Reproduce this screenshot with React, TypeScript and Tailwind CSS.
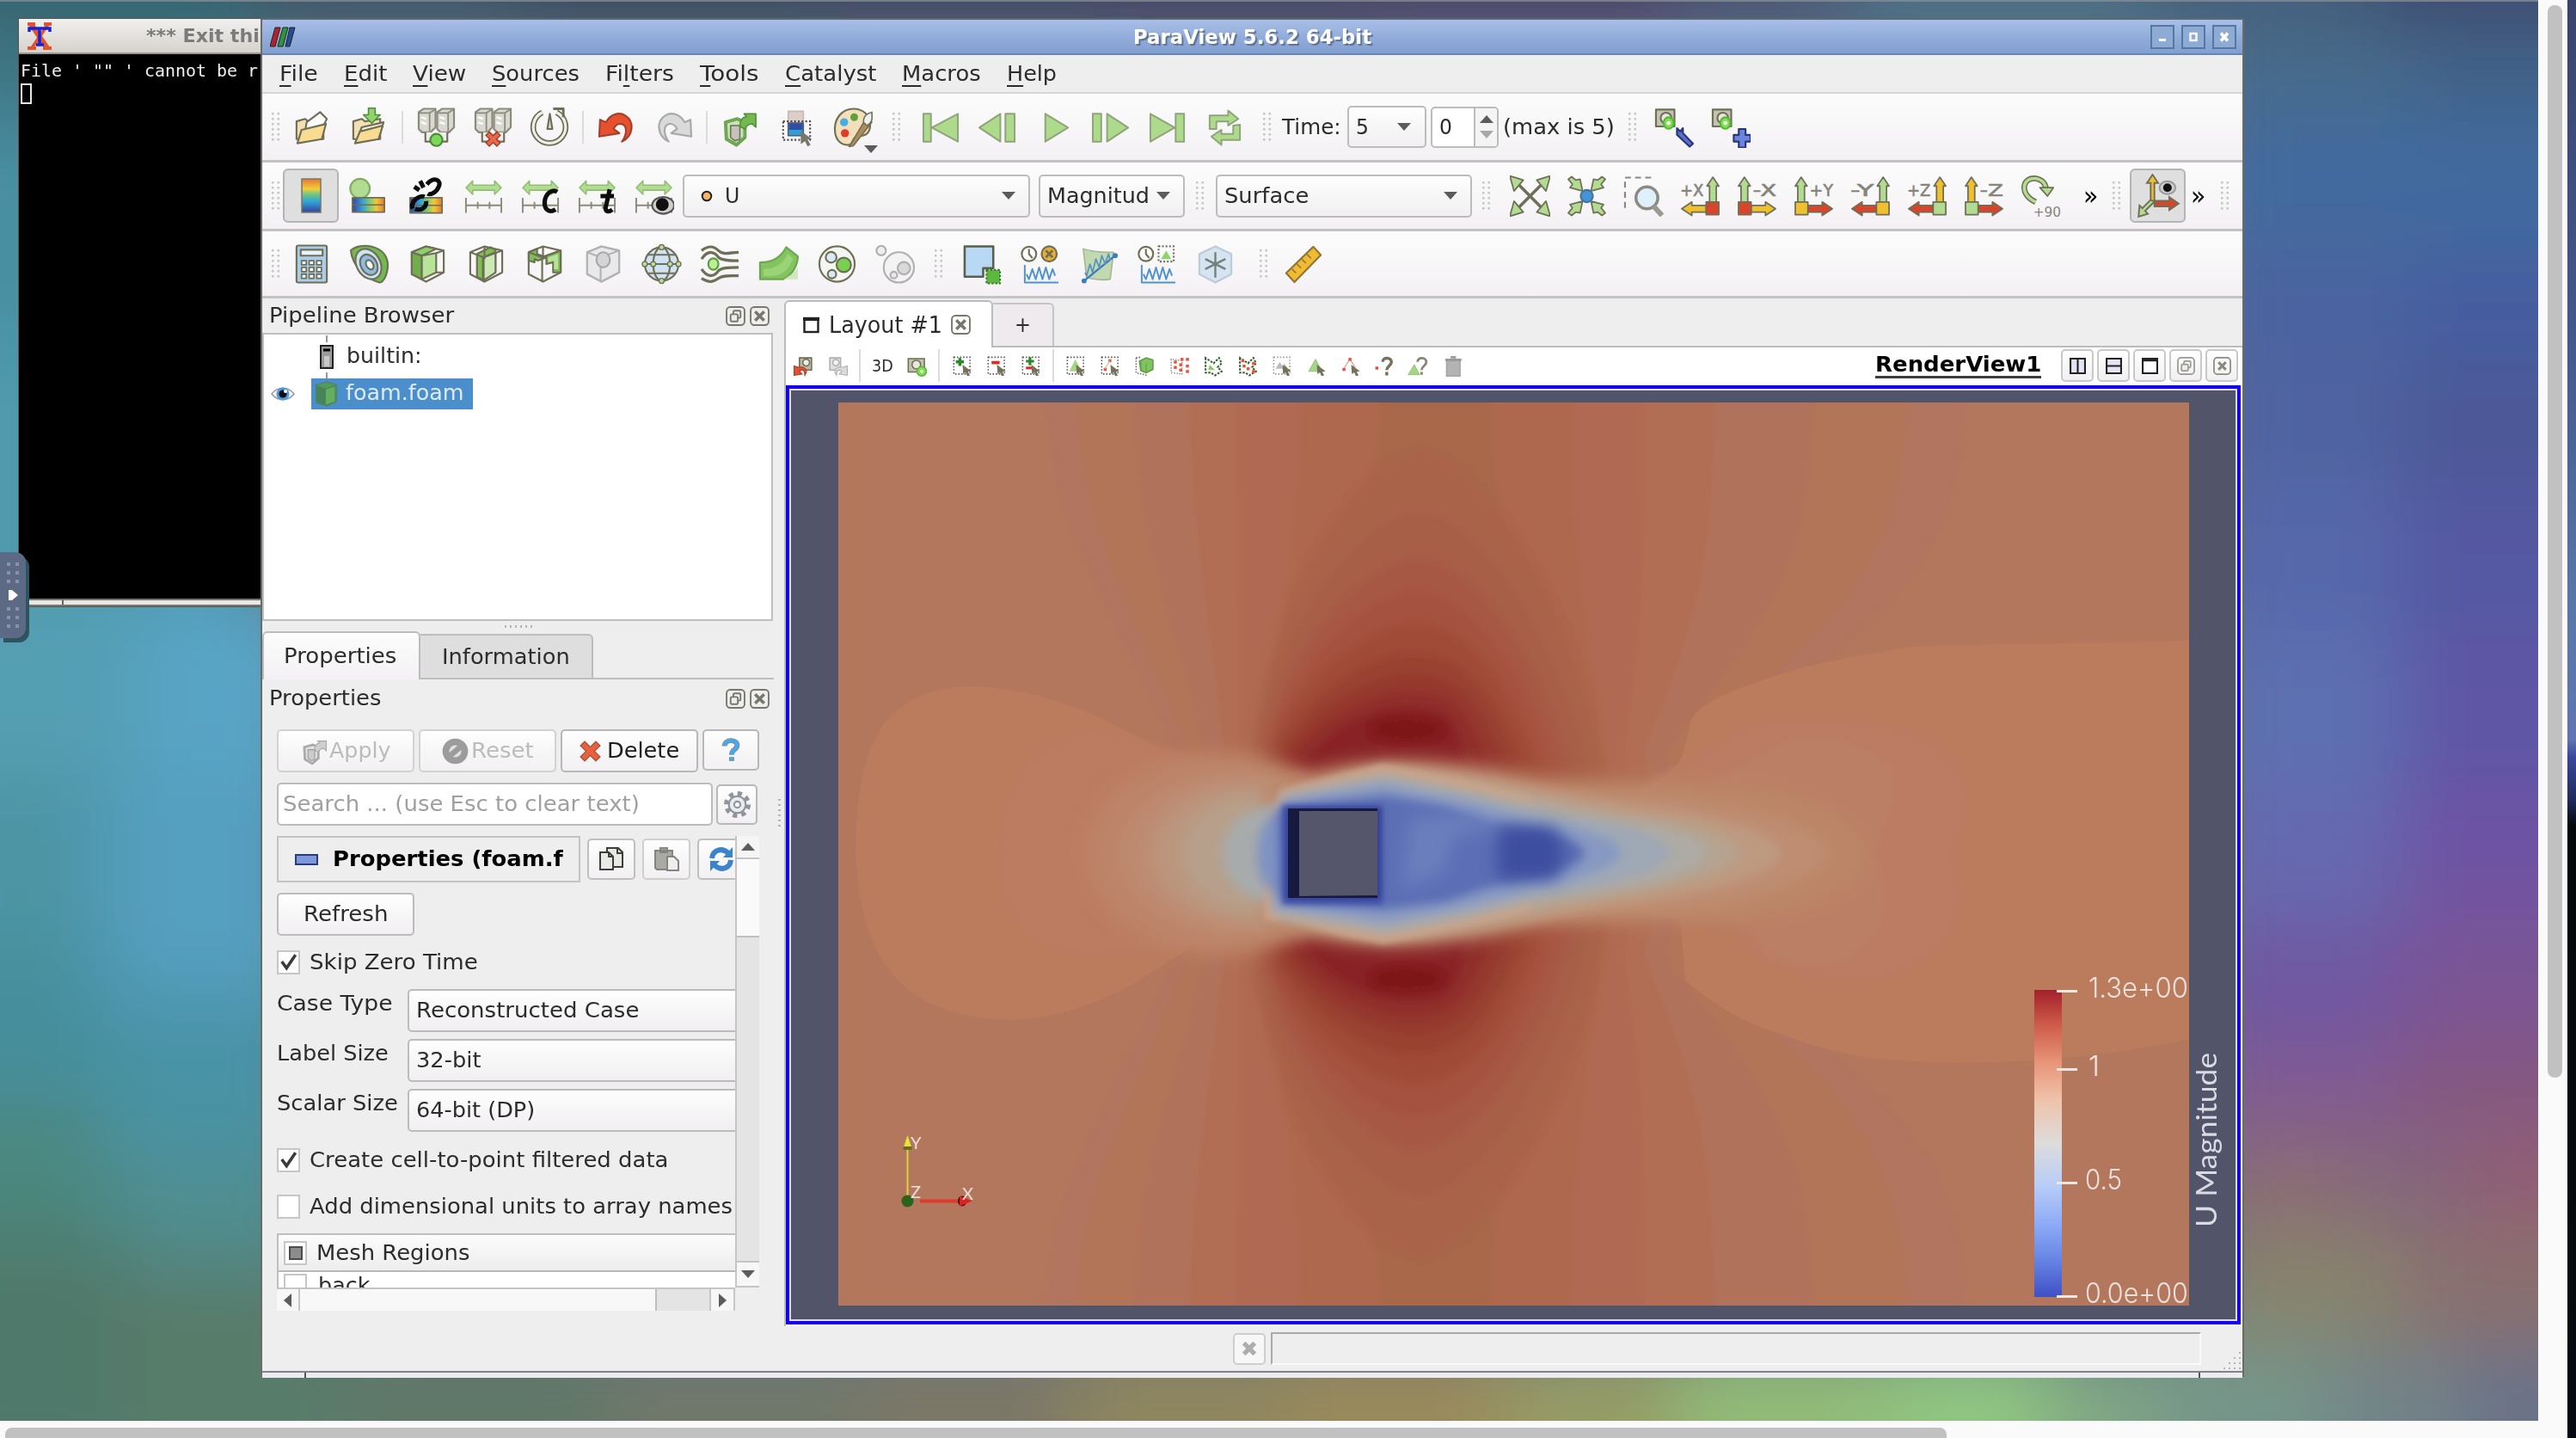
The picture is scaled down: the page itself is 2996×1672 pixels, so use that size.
import React, { useLayoutEffect, useRef, useState } from "react";

type Kids = { children?: React.ReactNode };

/* Text squeezed or stretched to an exact width, like hinted bitmap-scaled UI text. */
function T({ w, children, className = "" }: Kids & { w: number; className?: string }) {
  const ref = useRef<HTMLSpanElement>(null);
  const [k, setK] = useState(1);
  useLayoutEffect(() => {
    const n = ref.current?.offsetWidth || w;
    setK(w / n);
  }, [w]);
  return (
    <span className={"inline-block shrink-0 whitespace-pre " + className} style={{ width: w }}>
      <span ref={ref} className="inline-block origin-left" style={{ transform: `scaleX(${k})` }}>
        {children}
      </span>
    </span>
  );
}

const O = "#6f6f57";
const G = "#b2dc92";
const G2 = "#7fbf55";

function Ic({ children, w = "w-[66px]" }: Kids & { w?: string }) {
  return (
    <div className={"flex h-full shrink-0 items-center justify-center " + w}>
      <svg viewBox="0 0 24 24" className="h-[48px] w-[47px]" fill="none" stroke={O} strokeWidth="1.1" strokeLinejoin="round">
        {children}
      </svg>
    </div>
  );
}

function Handle({ w = "w-[12px]" }: { w?: string }) {
  return (
    <div className={"flex h-full shrink-0 items-center justify-center " + w}>
      <svg viewBox="0 0 10 34" className="h-[34px] w-[10px]" fill="#c6c6c6">
        {[0, 6, 12, 18, 24, 30].map((y) => (
          <g key={y}>
            <rect x="0" y={y} width="2.5" height="2.5" />
            <rect x="6.5" y={y} width="2.5" height="2.5" />
          </g>
        ))}
      </svg>
    </div>
  );
}

function Sep({ w = "w-[12px]" }: { w?: string }) {
  return (
    <div className={"flex h-full shrink-0 items-center justify-center " + w}>
      <div className="h-[38px] w-[2px] bg-[#dddcdd]" />
    </div>
  );
}

function Caret({ up = false, light = false }: { up?: boolean; light?: boolean }) {
  return (
    <svg viewBox="0 0 16 9" className="h-[9px] w-[16px] shrink-0" fill={light ? "#a8a8a8" : "#5c5c5c"}>
      {up ? <path d="M8 0 16 9H0z" /> : <path d="M0 0h16L8 9z" />}
    </svg>
  );
}

const comboCls =
  "flex shrink-0 items-center justify-between rounded-[5px] border-2 border-[#bdbcbd] bg-linear-to-b from-[#fefefe] to-[#f1eff1] ";
const barCls =
  "flex shrink-0 items-center border-b-[3px] border-[#c3c3c3] bg-linear-to-b from-[#fdfcfd] via-[#f8f7f8] to-[#f4f0f4] ";

/* ---------- toolbar icons ---------- */

const Folder = () => (
  <>
    <path d="M3 8.5 8 7l2 1.5 9-1.5v12H3z" fill="#f3dfb2" />
    <path d="M9 9 17 3l4 4-4 8H8z" fill="#fbfbfb" />
    <path d="M3.500 21.500 6 13.500 20.500 10 18 19z" fill="#f8dc92" />
  </>
);
const Save = () => (
  <>
    <path d="M3 8.500 8 7l2 1.500 9-1.500v12H3z" fill="#f3dfb2" />
    <path d="M5 20 8 12l13-3-3 10z" fill="#fbf3dc" />
    <path d="M4 21.500 7 14.500 20.500 11 18 19z" fill="#f8dc92" />
    <path d="M12 .6h4v4h3l-5 5-5-5h3z" fill="#8ed36c" stroke="#4f8d3a" strokeWidth=".8" />
  </>
);
const Servers = ({ bad = false }: { bad?: boolean }) => (
  <>
    {[1.500, 12.500].map((x) => (
      <g key={x}>
        <path d={`M${x} 3 l3 -2 h7 v11 l-3 3 h-5 l-2 -2z`} fill="#d9d9d2" stroke="#8b8b7c" />
        <path d={`M${x + 0.5} 3.500 h6 v11 M${x + 6.500} 3.500 l3 -2`} stroke="#8b8b7c" strokeWidth=".9" />
        <path d={`M${x + 1.500} 6 l3 1 M${x + 1.500} 9 l3 1`} stroke="#fff" strokeWidth="1.200" />
      </g>
    ))}
    <path d="M5.500 15v5.500h13V15" fill="#eee" />
    {bad ? (
      <>
        <path d="m8.500 15.500 7 7M15.500 15.500l-7 7" stroke="#a3402b" strokeWidth="3.600" />
        <path d="m9 16 6 6M15 16l-6 6" stroke="#e8694e" strokeWidth="2" />
      </>
    ) : (
      <circle cx="12" cy="19.500" r="3.600" fill="#7bd957" stroke="#4c8c37" />
    )}
  </>
);
const Timer = () => (
  <>
    <path d="M16 3.200A9.600 9.600 0 1 1 7.500 3.200" strokeWidth="3.400" />
    <path d="M16 3.200A9.600 9.600 0 1 1 7.500 3.200" stroke="#efefe8" strokeWidth="1.600" />
    <path d="M14 1h6v5" strokeWidth="1.500" />
    <path d="m12 4-1.500 9h3z" fill="#d8d8ce" />
  </>
);
const Undo = ({ grey = false }: { grey?: boolean }) => (
  <g transform={grey ? "matrix(-1 0 0 1 24 0)" : ""}>
    <path
      d="M2 7.500 5.500 9C8 4.500 13 2.500 17 5c5.500 3.500 5 12-2 15.500 3.500-5 3-10-.5-10.500-2-.3-3.500 1-4.500 3l3.500 2.500L1.500 17.500z"
      fill={grey ? "#d9dada" : "#e6502f"}
      stroke={grey ? "#a9a9a9" : "#a3402b"}
    />
  </g>
);
const CubeG = ({ front = "#b7e39a", side = "#6fae4b", top = "#8fce6b" }) => (
  <>
    <path d="m2.500 5 8.500-3.500L21.500 4v13L11 22.500 2.500 18z" fill="#f6f6f2" />
    <path d="m2.500 5 6 2v14L2.500 18z" fill={side} />
    <path d="m2.500 5 8.500-3.500L17 3 8.500 7z" fill={top} />
    <path d="M8.500 7 17 5.500V17l-8.500 4z" fill={front} />
    <path d="M17 5.500 21.500 4M17 17l4.500 0" />
  </>
);
const Extract = ({ grey = false }: { grey?: boolean }) => (
  <>
    <path d="m3.500 9 7-2 4.500 2v9l-5 4.500L4 19z" fill={grey ? "#e4e4e4" : "#c9e2b8"} stroke={grey ? "#aaa" : "#6fa653"} strokeWidth="2" />
    <path d="M6.500 11h5.500v8l-3 1-2.500-2z" fill={grey ? "#ccc" : "#c3c3b9"} strokeWidth=".8" stroke={grey ? "#999" : O} />
    <path d="M12 11.500c0-4 1.500-5.500 4-6L14.500 4h7v8l-2-2c-2.500 0-3.500 1-4.500 3z" fill={grey ? "#cfcfcf" : "#74b94f"} stroke={grey ? "#aaa" : "#4f8d3a"} strokeWidth=".8" />
  </>
);
const SelBar = () => (
  <>
    <rect x="7" y="2.500" width="9" height="7" fill="#dccfc8" stroke="#c5b8b2" strokeWidth=".8" />
    <rect x="4" y="8.500" width="16" height="11" strokeDasharray="1 1.200" stroke="#444" />
    <rect x="7" y="9.500" width="9" height="7.500" fill="#2f9ed0" stroke="#4a5a80" strokeWidth=".8" />
    <rect x="7.500" y="10" width="8" height="3.500" fill="#2f4fa5" stroke="none" />
    <path d="m14.500 14 6.500 5-2.500.3 1.800 3.200-1.800.8-1.500-3L14.500 22z" fill="#77776a" stroke="none" />
  </>
);
const Palette = () => (
  <>
    <path d="M12 1C5 1 1 7 1 13s3 9.500 8 9.500c3 0 2-4 5-5 3-.5 8 0 8-7C22 5 18 1 12 1z" fill="#f3dfb9" />
    <circle cx="12.500" cy="6" r="2.300" fill="#5fa23c" stroke="none" />
    <circle cx="6.500" cy="9" r="2.400" fill="#45aee6" stroke="none" />
    <circle cx="7" cy="15.500" r="2.400" fill="#dd3b2c" stroke="none" />
    <path d="m20 6-9 15-1.500 2.500L12 23 23 9z" fill="#b08b58" strokeWidth=".8" />
    <path d="M18 9c0-4 2-5 5-6 0 3 1 6-3 8z" fill="#eee" strokeWidth=".8" />
  </>
);
const vcr = { fill: "#aeda8c", stroke: "#8fa37c", strokeWidth: 1 };
const Vcr = ({ d }: { d: string }) => <path d={d} {...vcr} />;
const Loop = () => (
  <>
    <path d="M3 13V5h11V2l6 5-6 4V8.500H7V13z" {...vcr} />
    <path d="M21 10.500v9H10v3l-6-5 6-4v2.500h7v-5z" {...vcr} />
  </>
);
const Cam = () => (
  <>
    <path d="M1.500 1.500h11v10h-11z" fill="#c3c3af" />
    <circle cx="7.500" cy="6.500" r="3.200" fill="#e8e8dd" />
    <ellipse cx="9" cy="9.500" rx="3" ry="3.400" fill="#7ee052" stroke="#58b836" />
    <circle cx="9" cy="9.500" r="1.200" fill="#fff" stroke="none" />
  </>
);
const ColorBar = () => (
  <svg viewBox="0 0 24 40" className="h-[41px] w-[24px]" preserveAspectRatio="none">
    <defs>
      <linearGradient id="cb" x1="0" y1="0" x2="0" y2="1">
        <stop offset="0" stopColor="#e9772f" />
        <stop offset=".3" stopColor="#efcf3c" />
        <stop offset=".48" stopColor="#66c48a" />
        <stop offset=".7" stopColor="#2f9edb" />
        <stop offset="1" stopColor="#3a3f93" />
      </linearGradient>
    </defs>
    <rect x="1" y="1" width="22" height="38" fill="url(#cb)" stroke="#77776a" strokeWidth="1.500" />
  </svg>
);
const HBar = ({ x, y, w, h }: { x: number; y: number; w: number; h: number }) => (
  <>
    <rect x={x} y={y} width={w} height={h} fill="url(#hb)" strokeWidth=".9" />
    <path d={`M${x} ${y + h / 2}h${w}`} strokeWidth=".8" />
  </>
);
const Rescale = () => (
  <>
    <path d="M1.500 7 5.500 3v2.500h13V3l4 4-4 4V8.500h-13V11z" fill={G} stroke="#8fbf73" strokeWidth=".8" />
    <path d="M1 17.500h22M1.500 13v9M8.500 15.500v4M15.500 15.500v4M22.500 13v9" strokeWidth="1" stroke="#8b8b7a" />
  </>
);
const Arrow = ({ d, c }: { d: string; c: string }) => <path d={d} fill={c} strokeWidth=".9" />;

const R = "#d8452b";
const Y = "#efc02f";
/* Camera-axis button: an upright arrow, a cube and a side arrow. */
const Axis = ({ flip, up, side, cube, label }: { flip: boolean; up: string; side: string; cube: string; label: string }) => (
  <>
    <g transform={flip ? "matrix(-1 0 0 1 24 0)" : ""}>
      <Arrow c={up} d="M2.500 16V6H1L4.500 .8 8 6H6.500V16z" />
      <Arrow c={side} d="M8.500 17.500H17V15.500l6 4-6 4v-2H8.500z" />
      <rect x="1" y="15.500" width="7.500" height="7.500" fill={cube} strokeWidth=".9" />
    </g>
    <text x={flip ? 0 : 9.500} y="12" fontSize="10" textLength="14" lengthAdjust="spacingAndGlyphs" fill="#85857c" stroke="#85857c" strokeWidth=".3" fontFamily="DejaVu Sans">
      {label}
    </text>
  </>
);
const Plot = () => (
  <path d="M3 12.500v10.500h20M4 18l1.500 3 2-6 2 6 2-7 2 7 2-7 2 7 2-6 1.500 4" stroke="#4f93d0" strokeWidth="1" />
);
const Cube3 = () => <path d="m2.500 5 8.500-3.500L21.500 4v13L11 22.500 2.500 18zM2.500 5l8 3 11-4M10.500 8v14M11 1.500V9" />;

/* ---------- small view-toolbar icons ---------- */
function Sm({ children, w = "w-[40px]" }: Kids & { w?: string }) {
  return (
    <div className={"flex h-full shrink-0 items-center justify-center " + w}>
      <svg viewBox="0 0 16 16" className="h-[25px] w-[25px]" fill="none" stroke="#6f6f57">
        {children}
      </svg>
    </div>
  );
}
const Dots = ({ c = "#555" }) => <rect x="1.500" y="1.500" width="12" height="12.500" stroke={c} strokeDasharray="1 1.300" />;
const Cur = () => <path d="m8 7 6.500 5-2.500.3 1.500 2.700-2 .5-1.200-2.700L8.500 14z" fill="#77705a" stroke="none" />;
const Lasso = () => <path d="M2 2v11h4l3 2 5-3-3-3 3-3-2-4-4 4z" stroke="#2c5f2a" strokeDasharray="1.600 1" strokeWidth="1.300" />;
const RedDots = ({ p }: { p: number[][] }) => (
  <g fill="#ee4e35" stroke="none">
    {p.map(([x, y], i) => (
      <rect key={i} x={x} y={y} width="2.200" height="2.200" />
    ))}
  </g>
);

/* ---------- dock helpers ---------- */
const DockButtons = () => (
  <div className="flex gap-[5px]">
    <svg viewBox="0 0 22 22" className="h-[23px] w-[23px]" fill="none" stroke="#77776c" strokeWidth="1.800">
      <rect x="1" y="1" width="20" height="20" rx="4" />
      <rect x="8.500" y="5" width="8" height="8" rx="1.500" />
      <rect x="5.500" y="9" width="8" height="8" rx="1.500" fill="#eee" />
    </svg>
    <XBox />
  </div>
);
const XBox = () => (
  <svg viewBox="0 0 22 22" className="h-[23px] w-[23px]" fill="none" stroke="#77776c" strokeWidth="1.800">
    <rect x="1" y="1" width="20" height="20" rx="4" />
    <path d="m6 6 10 10M16 6 6 16" strokeWidth="3.400" />
  </svg>
);
const btn =
  "flex shrink-0 items-center justify-center rounded-[5px] border-2 bg-linear-to-b from-[#fefefe] to-[#f2f0f2] ";
const Check = ({ on = false, part = false }: { on?: boolean; part?: boolean }) => (
  <div className="flex h-[28px] w-[27px] shrink-0 items-center justify-center border-2 border-[#c6c6c6] bg-white">
    {on && (
      <svg viewBox="0 0 20 20" className="h-[22px] w-[22px]" fill="none" stroke="#3a3a3a" strokeWidth="3.200">
        <path d="m2.500 9 5 7L17 2" />
      </svg>
    )}
    {part && <div className="h-[16px] w-[16px] border-2 border-[#4c4c4c] bg-[#8c8c8c]" />}
  </div>
);

function Prop({ label, lw, value, vw }: { label: string; lw: number; value: string; vw: number }) {
  return (
    <div className="flex h-[58px] shrink-0 items-start">
      <div className="w-[152px] shrink-0 pt-[2px]">
        <T w={lw}>{label}</T>
      </div>
      <div className="flex h-[50px] w-[420px] shrink-0 items-center rounded-[5px] border-2 border-[#bdbcbd] bg-linear-to-b from-[#fefefe] to-[#f1eff1] pl-[8px]">
        <T w={vw}>{value}</T>
      </div>
    </div>
  );
}

/* ---------- wallpaper ---------- */
const patches: [number, number, number, number, string][] = [
  [-100, -100, 400, 130, "#35606a"], [300, -100, 300, 130, "#3b5566"], [600, -100, 350, 130, "#38485c"],
  [950, -100, 350, 130, "#3d4560"], [1300, -100, 300, 130, "#443f62"], [1600, -100, 350, 130, "#4c3f68"],
  [1950, -100, 200, 130, "#4a5575"], [2150, -100, 350, 130, "#466f86"], [2500, -100, 250, 130, "#435f7b"],
  [2750, -100, 350, 130, "#3c4c70"],
  [-100, 30, 400, 120, "#3f7785"], [-100, 150, 400, 250, "#488fa2"], [-100, 400, 400, 300, "#4f9aad"],
  [-100, 700, 260, 200, "#559fb3"], [160, 700, 200, 250, "#59a4c6"], [-100, 900, 220, 200, "#4e94a4"],
  [120, 900, 240, 260, "#549fc0"], [-100, 1100, 220, 180, "#478e9c"], [120, 1160, 240, 180, "#4a93a6"],
  [-100, 1280, 220, 150, "#4b887f"], [120, 1340, 240, 130, "#4f8e90"], [-100, 1430, 240, 300, "#50796b"],
  [140, 1470, 260, 300, "#587c6a"],
  [400, 1560, 300, 200, "#607868"], [700, 1560, 300, 200, "#6f786a"], [1000, 1560, 250, 200, "#7c7868"],
  [1250, 1560, 250, 200, "#8f865e"], [1500, 1560, 250, 200, "#9a8a5c"], [1750, 1560, 200, 200, "#959b66"],
  [1950, 1560, 250, 200, "#92bb78"], [2200, 1560, 180, 200, "#90c682"], [2380, 1560, 130, 200, "#80a584"],
  [2510, 1550, 200, 200, "#74958a"], [2710, 1550, 150, 200, "#728388"], [2860, 1550, 200, 200, "#6b7288"],
  [2560, 40, 250, 100, "#466c8c"], [2810, 40, 250, 100, "#3f6288"], [2560, 140, 500, 150, "#436a9f"],
  [2560, 290, 250, 130, "#4b64a0"], [2810, 290, 250, 130, "#445da0"], [2560, 420, 230, 150, "#5063a2"],
  [2790, 420, 270, 150, "#4d5997"], [2560, 570, 230, 170, "#5668aa"], [2790, 570, 270, 170, "#5459a2"],
  [2560, 740, 230, 180, "#5d6fb1"], [2790, 740, 270, 180, "#5f57a6"], [2560, 920, 230, 150, "#6669b0"],
  [2790, 920, 270, 150, "#6e53a3"], [2560, 1070, 230, 140, "#7059a2"], [2790, 1070, 270, 140, "#7b5594"],
  [2560, 1210, 230, 110, "#815a92"], [2790, 1210, 270, 110, "#855880"], [2560, 1320, 180, 110, "#8b6c75"],
  [2740, 1320, 130, 110, "#84667b"], [2870, 1320, 190, 110, "#925f74"], [2560, 1430, 230, 130, "#87836d"],
  [2790, 1430, 270, 130, "#8a6f6e"],
];

/* ---------- velocity field ---------- */
const outer: [number, number, string][] = [
  [1215, 2288, "#b2745e"], [1253, 2218, "#b37558"], [1318, 2109, "#b1725b"], [1383, 1995, "#b16e54"],
  [1437, 1914, "#b06a52"], [1513, 1827, "#ae674d"], [1605, 1733, "#a86748"],
];
const inner: [number, number, number, string][] = [
  [1463, 1452, 1868, "#a96349"], [1390, 1456, 1848, "#a75f46"], [1338, 1462, 1830, "#a75945"],
  [1300, 1466, 1812, "#a55240"], [1262, 1470, 1796, "#a04b37"], [1228, 1476, 1780, "#994233"],
  [1202, 1484, 1762, "#95382e"], [1182, 1494, 1742, "#8f2d29"], [1163, 1512, 1715, "#882225"],
];

const HalfField = () => (
  <g>
    {outer.map(([l, r, c], i) => (
      <path
        key={i}
        fill={c}
        d={`M${l} 1530C${l} 1330 ${l + (1450 - l) * 0.62} 1200 ${1405 + i * 8} 993L${2010 - i * 24} 993L${1985 - i * 24} 1110C${2000 + (r - 2000) * 0.5 - i * 12} 1240 ${r} 1300 ${r} 1530Z`}
      />
    ))}
    <g filter="url(#b6)">
      {inner.map(([b, l, r, c], i) => (
        <path
          key={i}
          fill={c}
          d={`M${l} 993L${l + 2} 1085C${l + 14} ${1085 + (b - 1085) * 0.55} 1590 ${b} ${1652 - i * 2} ${b}C1712 ${b} ${r - 30} ${1085 + (b - 1085) * 0.55} ${r} 1070L${r} 993Z`}
        />
      ))}
    </g>
    <g filter="url(#b6)">
      <ellipse cx="1636" cy="1138" rx="44" ry="14" fill="#7d1519" />
    </g>
  </g>
);

const Field = () => (
  <svg viewBox="975 468 1571 1050" className="block h-[1050px] w-[1571px]">
    <defs>
      {[3, 6, 10, 16].map((n) => (
        <filter key={n} id={"b" + n} x="-30%" y="-30%" width="160%" height="160%">
          <feGaussianBlur stdDeviation={n} />
        </filter>
      ))}
      <clipPath id="low">
        <rect x="900" y="993" width="1700" height="600" />
      </clipPath>
    </defs>
    <rect x="975" y="468" width="1571" height="1050" fill="#b3775d" />
    <g filter="url(#b3)">
      <g clipPath="url(#low)">
        <HalfField />
      </g>
      <g transform="matrix(1 0 0 -1 0 1986)">
        <g clipPath="url(#low)">
          <HalfField />
        </g>
      </g>
    </g>
    {/* free-stream plateaus upstream and downstream of the body */}
    <path
      fill="#bb7b5d"
      d="M2560 744C2400 750 2300 748 2225 752 2120 768 2080 780 2046 792 2000 808 1975 822 1968 835 1960 855 1962 875 1950 890L1922 912 1900 993 1955 1075 1960 1140C1990 1165 2020 1185 2050 1195 2110 1218 2160 1232 2225 1234 2340 1240 2450 1228 2560 1206Z"
    />
    <path
      fill="#bb7b5d"
      d="M995 990C996 860 1030 800 1130 798 1240 800 1330 860 1410 905L1440 993 1400 1090C1330 1140 1270 1180 1180 1186 1060 1184 1000 1130 995 990Z"
    />
    <g filter="url(#b3)">
      <path fill="#bc7c62" d="M1160 993C1165 900 1200 850 1290 850L1450 900V1090L1310 1110C1200 1120 1165 1080 1160 993Z" />
      <path fill="#bb7b63" d="M2020 850C2060 828 2160 830 2225 850 2300 880 2300 950 2270 993 2300 1050 2280 1110 2190 1140 2120 1150 2040 1130 2020 1080L1900 1060V920Z" />
      <path fill="#bb7f66" d="M2045 880C2080 850 2150 850 2200 890 2210 930 2190 960 2180 993 2200 1040 2200 1080 2150 1115 2100 1130 2050 1120 2040 1080L1950 1050V930Z" />
    </g>
    {/* upstream stagnation halo */}
    <g filter="url(#b10)">
      <ellipse cx="1420" cy="993" rx="158" ry="118" fill="#bc8367" />
      <ellipse cx="1440" cy="993" rx="142" ry="98" fill="#bd8a6f" />
      <ellipse cx="1456" cy="993" rx="118" ry="82" fill="#bb957d" />
      <ellipse cx="1466" cy="993" rx="92" ry="68" fill="#b6a08c" />
    </g>
    {/* wake, outermost contour first */}
    <g filter="url(#b10)">
      <path fill="#bb8566" d="M1470 915C1560 880 1650 872 1800 905L2030 912C2110 925 2165 950 2172 993 2165 1040 2110 1062 2030 1070L1800 1075C1650 1112 1560 1105 1470 1075Z" />
      <path fill="#be8d72" d="M1480 925L1600 885C1700 888 1780 912 1900 922 2010 930 2120 955 2130 992 2120 1030 2010 1058 1900 1064 1780 1074 1700 1098 1600 1100L1480 1065Z" />
    </g>
    <g filter="url(#b6)">
      <path fill="#bd9a80" d="M1490 925L1560 900 1610 888C1690 895 1800 920 1900 936 1990 946 2068 966 2072 992 2068 1018 1990 1038 1900 1050 1800 1066 1690 1090 1610 1096L1560 1088 1475 1068Z" />
      <path fill="#b5a390" d="M1488 926L1560 906 1610 896C1690 902 1790 926 1880 944 1960 954 2020 970 2024 992 2020 1012 1960 1030 1880 1042 1790 1058 1690 1082 1610 1088L1560 1080 1476 1064Z" />
      <ellipse cx="1484" cy="993" rx="62" ry="56" fill="#a8abac" />
    </g>
    <g filter="url(#b3)">
      <path fill="#cfa287" d="M1490 918L1555 902 1608 889 1700 906 1780 926 1780 1059 1700 1078 1608 1097 1555 1086 1500 1068 1470 1069 1476 960Z" opacity=".8" />
    </g>
    <g filter="url(#b6)">
      <path fill="#aeaaa4" d="M1492 922L1560 908 1610 898 1700 916 1800 938 1880 952C1950 962 1984 974 1986 992 1984 1008 1950 1022 1880 1034L1800 1046 1700 1070 1610 1087 1555 1078 1478 1064 1478 960Z" />
      <path fill="#9fa8b5" d="M1480 945L1492 926 1560 914 1610 905 1700 922 1800 945C1890 958 1940 972 1944 992 1940 1010 1890 1028 1800 1041L1700 1063 1610 1080 1555 1070 1480 1060Z" />
      <path fill="#8799c2" d="M1476 950L1494 930 1560 920 1610 912 1700 930 1790 954C1850 964 1882 976 1886 992 1882 1006 1850 1020 1790 1032L1700 1056 1610 1072 1555 1064 1482 1054Z" />
      <ellipse cx="1486" cy="993" rx="24" ry="46" fill="#7f93c2" />
      <path fill="#5b6eb5" d="M1486 942L1500 936 1610 924 1680 936 1740 956C1810 966 1842 978 1844 992 1842 1006 1810 1018 1740 1030L1680 1050 1610 1058 1500 1050 1488 1042Z" />
    </g>
    <g filter="url(#b10)">
      <path fill="#7488c2" d="M1640 950l70-4 40 14-60 14-10 40-50 20z" opacity=".6" />
      <path fill="#3c4d9f" d="M1742 962h66l12 30-10 30h-68z" />
    </g>
    <g filter="url(#b3)">
      <path fill="#4150a6" d="M1491 936h117v116h-117z" opacity=".85" />
      <path fill="#303f94" d="M1496 939h111v107h-111z" />
    </g>
    <rect x="1498" y="940" width="104" height="104" fill="#151a3e" />
    <path d="M1511 943h91v98l-91 1z" fill="#55566b" />
    {/* orientation axes */}
    <g>
      <path d="M1055.500 1335v55" stroke="#ddd23e" strokeWidth="2" />
      <path d="M1055.500 1320l5 15h-10z" fill="#e6e435" />
      <rect x="1050.500" y="1333" width="10" height="4" fill="#6d6a22" />
      <path d="M1070 1394.500h45v4h-45z" fill="#e0392d" />
      <ellipse cx="1119" cy="1396.500" rx="5" ry="6" fill="#3c0c0c" />
      <path d="M1116 1390.500l15 6-15 6z" fill="#dd2222" />
      <circle cx="1055.500" cy="1396.500" r="7" fill="#2a6418" />
      <g fill="#eadfd9" fontFamily="Lato" fontSize="20">
        <text x="1059" y="1336">Y</text>
        <text x="1059" y="1393">Z</text>
        <text x="1119" y="1395">X</text>
      </g>
    </g>
  </svg>
);

const ViewButton = ({ children }: Kids) => (
  <div className="flex h-[38px] w-[38px] shrink-0 items-center justify-center rounded-[5px] border-2 border-[#c9c8c9] bg-linear-to-b from-white to-[#f1eff1]">
    {children}
  </div>
);

const legend = [
  { y: 0, w: 116, t: "1.3e+00" },
  { y: 91, w: 13, t: "1" },
  { y: 223, w: 43, t: "0.5" },
  { y: 355, w: 120, t: "0.0e+00" },
];

const WinBtn = ({ children }: Kids) => (
  <div className="flex h-[28px] w-[28px] items-center justify-center border-2 border-[#56779f] bg-[#8eabd6]">
    <svg viewBox="0 0 16 16" className="h-[16px] w-[16px]" fill="none" stroke="#fff" strokeWidth="3">
      {children}
    </svg>
  </div>
);

const menus: [string, string, string, number][] = [
  ["", "F", "ile", 45], ["", "E", "dit", 50], ["", "V", "iew", 62], ["", "S", "ources", 102], ["Fi", "l", "ters", 80],
  ["", "T", "ools", 69], ["", "C", "atalyst", 106], ["", "M", "acros", 92], ["", "H", "elp", 58],
];

export default function App() {
  return (
    <div className="relative h-[1672px] w-[2996px] overflow-hidden bg-[#fafafa] font-['DejaVu_Sans',sans-serif] text-[25px] leading-[30px] text-[#2c2c2c]">
      <svg width="0" height="0" className="absolute">
        <defs>
          <linearGradient id="hb">
            <stop offset="0" stopColor="#3f3f9c" />
            <stop offset=".3" stopColor="#2f9edb" />
            <stop offset=".55" stopColor="#86c96c" />
            <stop offset=".75" stopColor="#f0c83a" />
            <stop offset="1" stopColor="#e9772f" />
          </linearGradient>
        </defs>
      </svg>

      {/* page body: desktop, scrollbar, neighbouring strip */}
      <div className="flex h-[1652px]">
        <div className="relative h-[1652px] w-[2952px] shrink-0 overflow-hidden">
          <svg viewBox="0 0 2952 1652" className="block h-[1652px] w-[2952px]">
            <defs>
              <filter id="wall" x="-5%" y="-5%" width="110%" height="110%">
                <feGaussianBlur stdDeviation="44" />
              </filter>
            </defs>
            <rect width="2952" height="1652" fill="#607080" />
            <g filter="url(#wall)">
              {patches.map(([x, y, w, h, c], i) => (
                <rect key={i} x={x} y={y} width={w + 4} height={h + 4} fill={c} />
              ))}
            </g>
            <rect width="2952" height="2" fill="#8a9298" opacity=".7" />
          </svg>

          {/* terminal window */}
          <div className="absolute top-[21px] left-[21px] flex h-[685px] w-[290px] flex-col border border-[#55564e] bg-black">
            <div className="flex h-[41px] shrink-0 items-center border-b-2 border-[#9a9893] bg-linear-to-b from-[#f1f0ee] to-[#d6d2cd] pl-[8px]">
              <div className="relative h-[32px] w-[32px]">
                <svg viewBox="0 0 32 32" className="h-[32px] w-[32px]" fill="none">
                  <path d="M2 2h9M21 2h9M2 30h10M20 30h10" stroke="#e0552c" strokeWidth="4" />
                  <path d="M6 2 25 30" stroke="#e0552c" strokeWidth="6" />
                  <path d="M26 2 7 30" stroke="#e0552c" strokeWidth="4" />
                  <path d="M4 11V7h24v4M16 7v19M12 26h9" stroke="#1a20d8" strokeWidth="3.500" />
                </svg>
              </div>
              <T w={132} className="ml-[108px] text-[22px] font-bold text-[#7b7b7b]">*** Exit thi</T>
            </div>
            <div className="flex-1 pt-[4px] pl-[2px] font-['DejaVu_Sans_Mono',monospace] text-[20px] text-[#f0f0f0]">
              <T w={276} className="block h-[28px]">{`File ' "" ' cannot be r`}</T>
              <div className="h-[24px] w-[13px] border-2 border-[#e6e6e6]" />
            </div>
            <div className="flex h-[9px] shrink-0 border-y-2 border-[#77756f] bg-[#e9e8e5]">
              <div className="w-[52px] border-r-2 border-[#666]" />
            </div>
          </div>

          {/* control-bar handle */}
          <div className="absolute top-[642px] left-0 flex h-[100px] w-[30px] flex-col items-center justify-center rounded-r-[12px] bg-[#5d6a85] shadow-[4px_5px_0_#2c5560]">
            <svg viewBox="0 0 30 100" className="h-[100px] w-[30px]" fill="#8993a8">
              {[12, 22, 32, 64, 74, 84].map((y) => (
                <g key={y}>
                  <rect x="8" y={y} width="4" height="4" />
                  <rect x="18" y={y} width="4" height="4" />
                </g>
              ))}
              <path d="M10 44h4l7 6-7 6h-4z" fill="#fff" />
            </svg>
          </div>

          {/* ParaView window */}
          <div className="absolute top-[21px] left-[303px] flex h-[1580px] w-[2307px] flex-col border-2 border-[#6a6b66] border-t-[#5c6a78] bg-[#efeeef]">
            {/* title bar */}
            <div className="flex h-[41px] shrink-0 items-center border-b-2 border-[#6884b5] bg-linear-to-b from-[#a8bfe8] via-[#93addb] to-[#819fd0] pl-[9px]">
              <svg viewBox="0 0 30 24" className="h-[24px] w-[30px]" stroke="#222" strokeWidth="1">
                <path d="M6 1h6L6 23H0z" fill="#b0222c" />
                <path d="M15 1h6l-6 22H9z" fill="#2f9440" />
                <path d="M23 1h6l-6 22h-5z" fill="#234d94" />
              </svg>
              <T w={277} className="ml-[974px] text-[22.500px] font-bold text-white [text-shadow:2px_2px_1px_#5f7190]">ParaView 5.6.2 64-bit</T>
              <div className="ml-auto flex gap-[8px] pr-[7px]">
                <WinBtn><path d="M4 11.500h8" /></WinBtn>
                <WinBtn><rect x="4.500" y="4" width="7" height="8" strokeWidth="2.400" /></WinBtn>
                <WinBtn><path d="m4 3.500 8 9M12 3.500l-8 9" strokeWidth="3.600" /></WinBtn>
              </div>
            </div>

            {/* menu bar */}
            <div className="flex h-[45px] shrink-0 items-center gap-[30px] border-b-2 border-[#d8d7d8] pl-[20px]">
              {menus.map(([a, u, b, w]) => (
                <T key={u + b} w={w}>
                  {a}
                  <span className="underline decoration-2 underline-offset-[5px]">{u}</span>
                  {b}
                </T>
              ))}
            </div>

            {/* toolbar 1 */}
            <div className={barCls + "h-[80px] pl-[8px]"}>
              <Handle w="w-[16px]" />
              <Ic><Folder /></Ic>
              <Ic><Save /></Ic>
              <Sep w="w-[13px]" />
              <Ic><Servers /></Ic>
              <Ic><Servers bad /></Ic>
              <Ic><Timer /></Ic>
              <Sep />
              <Ic><Undo /></Ic>
              <Ic><Undo grey /></Ic>
              <Sep w="w-[11px]" />
              <Ic><Extract /></Ic>
              <Ic><SelBar /></Ic>
              <div className="relative h-full">
                <Ic><Palette /></Ic>
                <div className="absolute right-[4px] bottom-[8px]"><Caret /></div>
              </div>
              <Handle w="w-[36px]" />
              <Ic><Vcr d="M1.500 4h4.500v16.500H1.500zM6.500 12.200 22 4v16.500z" /></Ic>
              <Ic><Vcr d="M1 12.200 13.500 4v16.500zM16.500 4h5.500v16.500h-5.500z" /></Ic>
              <Ic><Vcr d="M6.500 4 20 12.200 6.500 20.500z" /></Ic>
              <Ic><Vcr d="M1 4h5v16.500H1zM9.500 4 22 12.200 9.500 20.500z" /></Ic>
              <Ic><Vcr d="M1.500 4 16 12.200 1.500 20.500zM16.500 4h5v16.500h-5z" /></Ic>
              <Ic><Loop /></Ic>
              <Handle w="w-[34px]" />
              <T w={69}>Time:</T>
              <div className={comboCls + "ml-[7px] h-[49px] w-[92px] px-[8px] pr-[16px]"}>
                <T w={15}>5</T>
                <Caret />
              </div>
              <div className="ml-[5px] flex h-[48px] w-[79px] shrink-0 items-center overflow-hidden rounded-[5px] border-2 border-[#bdbcbd] bg-white pl-[8px]">
                <T w={15}>0</T>
                <div className="ml-auto flex h-full w-[27px] flex-col items-center justify-center gap-[9px] border-l-2 border-[#bdbcbd] bg-[#f5f4f5]">
                  <Caret up />
                  <Caret light />
                </div>
              </div>
              <T w={130} className="ml-[5px]">(max is 5)</T>
              <Handle w="w-[42px]" />
              <Ic w="w-[52px]">
                <Cam />
                <path d="M14 12.500v4l7.500 7 2-1.800-6-6.200V12.500l-1.500 2z" fill="#5a70c8" stroke="#27357f" />
              </Ic>
              <Ic w="w-[80px]">
                <Cam />
                <path d="M17 13h4v3.500h3v4h-3V24h-4v-3.500h-3v-4h3z" fill="#6b86d8" stroke="#27357f" />
              </Ic>
            </div>

            {/* toolbar 2 */}
            <div className={barCls + "h-[80px] pl-[8px]"}>
              <Handle w="w-[16px]" />
              <div className="flex h-[63px] w-[65px] shrink-0 items-center justify-center rounded-[6px] border-2 border-[#b4b4b4] bg-[#dfdfdf]">
                <ColorBar />
              </div>
              <Ic w="w-[68px]">
                <circle cx="7" cy="7.500" r="5.800" fill={G} stroke="#7fae63" />
                <HBar x={2.500} y={13} w={19} h={8.500} />
              </Ic>
              <Ic w="w-[68px]">
                <HBar x={2} y={13} w={19} h={9} />
                <path d="M3.500 19.500C2 15 8 11 10.500 12.500M5 19.500C8 21 12 19 11.500 15M12 5c4-5 9-2.500 7 1.500-1.500 3.500-5 5-6.500 4M4.500 6.500l3 2M8 3l2 4" stroke="#0c0c0c" strokeWidth="2.600" />
              </Ic>
              <Ic w="w-[65px]"><Rescale /></Ic>
              <Ic>
                <Rescale />
                <path d="M22 9.500c-3-2-7 1-7.500 6-.3 4 2.500 7 6.500 4.500" stroke="#0c0c0c" strokeWidth="2.600" />
              </Ic>
              <Ic>
                <Rescale />
                <path d="M19.500 8 17 19c0 2.500 2 2.500 4 1M14 12h8" stroke="#0c0c0c" strokeWidth="2.600" />
              </Ic>
              <Ic w="w-[67px]">
                <Rescale />
                <ellipse cx="17.500" cy="17.500" rx="6.500" ry="5" fill="#cfd0c8" stroke="#555" />
                <circle cx="17" cy="17" r="3.800" fill="#111" stroke="none" />
              </Ic>
              <div className={comboCls + "h-[50px] w-[404px] pr-[15px] pl-[19px]"}>
                <div className="flex items-center gap-[14px]">
                  <svg viewBox="0 0 14 14" className="h-[14px] w-[14px]"><circle cx="7" cy="7" r="5.300" fill="#f5b36a" stroke="#222" strokeWidth="2" /></svg>
                  <T w={17}>U</T>
                </div>
                <Caret />
              </div>
              <div className={comboCls + "ml-[10px] h-[50px] w-[170px] pr-[15px] pl-[8px]"}>
                <div className="w-[119px] overflow-hidden"><T w={134}>Magnitude</T></div>
                <Caret />
              </div>
              <Handle w="w-[36px]" />
              <div className={comboCls + "h-[50px] w-[298px] pr-[15px] pl-[8px]"}>
                <T w={98}>Surface</T>
                <Caret />
              </div>
              <Handle w="w-[34px]" />
              <Ic>
                <path d="M4 4 20 20M20 4 4 20" strokeWidth="1.800" />
                <path d="M0 0l8 2.500L2.500 9zM24 0l-8 2.500L21.500 9zM0 24l8-2.500L2.500 15zM24 24l-8-2.500L21.500 15z" fill={G} strokeWidth=".9" />
              </Ic>
              <Ic>
                <path d="M9.500 9 2 7l1.500-2L1 2l2-1.500 2.500 2L8 2zM14.500 9 22 7l-1.500-2L23 2 21 .5l-2.500 2L16 2zM9.500 15 2 17l1.500 2L1 22l2 1.500 2.500-2L8 22zM14.500 15l7.500 2-1.500 2 2.500 3-2 1.500-2.500-2L16 22z" fill={G} strokeWidth=".9" />
                <circle cx="12" cy="12" r="3.600" fill="#4394d8" stroke="#44749c" />
              </Ic>
              <Ic>
                <path d="M1 19V1h18" strokeDasharray="3.500 2.500" stroke="#888" />
                <circle cx="14" cy="13" r="6.500" fill="#dff0fb" stroke="#8b8b84" strokeWidth="1.800" />
                <path d="m18 18 5 5.500" strokeWidth="3" stroke="#9a9a92" />
              </Ic>
              <Ic><Axis flip up={G} side={Y} cube={R} label="+X" /></Ic>
              <Ic><Axis flip={false} up={G} side={Y} cube={R} label="-X" /></Ic>
              <Ic><Axis flip={false} up={G} side={R} cube={Y} label="+Y" /></Ic>
              <Ic><Axis flip up={G} side={R} cube={Y} label="-Y" /></Ic>
              <Ic><Axis flip up={Y} side={R} cube={G} label="+Z" /></Ic>
              <Ic><Axis flip={false} up={Y} side={R} cube={G} label="-Z" /></Ic>
              <Ic>
                <path d="M9 15.500C-1 11 1 1 8.500 1.500c5 .5 6.500 4 6.500 6" strokeWidth="3.400" />
                <path d="M9 15.500C-1 11 1 1 8.500 1.500c5 .5 6.500 4 6.500 6" stroke={G} strokeWidth="1.800" />
                <path d="M11.500 7h8L16 12z" fill={G} strokeWidth=".9" />
                <text x="7.500" y="24" fontSize="8.500" textLength="16.500" lengthAdjust="spacingAndGlyphs" fill="#85857c" stroke="none" fontFamily="DejaVu Sans">+90</text>
              </Ic>
              <T w={17} className="ml-[17px] text-[30px] text-black">»</T>
              <Handle w="w-[44px]" />
              <div className="-ml-[7px] flex h-[63px] w-[65px] shrink-0 items-center justify-center rounded-[6px] border-2 border-[#b4b4b4] bg-[#dfdfdf]">
                <svg viewBox="0 0 24 24" className="h-[52px] w-[52px]" fill="none" stroke={O} strokeWidth=".9">
                  <path d="M8 15V5H6L9 .5 12 5h-2v10z" fill={Y} />
                  <path d="M10 14.500h8v-2l5 3.500-5 3.500v-2h-8z" fill={R} />
                  <path d="m10 15-5 5 1.500 1.500L1.500 23l.5-6 1.500 1.500L8 14z" fill={G} />
                  <ellipse cx="17" cy="7.500" rx="4.300" ry="3.500" fill="#ccc" stroke="#999" />
                  <circle cx="17" cy="7.500" r="2.300" fill="#111" stroke="none" />
                </svg>
              </div>
              <T w={17} className="ml-[6px] text-[30px] text-black">»</T>
              <Handle w="w-[46px]" />
            </div>

            {/* toolbar 3 */}
            <div className={barCls + "h-[78px] pl-[8px]"}>
              <Handle w="w-[16px]" />
              <Ic>
                <rect x="3" y="1" width="18" height="22" rx="1" fill="#a9cdea" />
                <rect x="5.500" y="3.500" width="13" height="3.500" fill="#e8f3fb" />
                {[10, 14, 18].map((y) => [6, 10.500, 15].map((x) => <rect key={x + "-" + y} x={x} y={y} width="2.800" height="2.500" fill="#fff" strokeWidth=".9" />))}
              </Ic>
              <Ic w="w-[68px]">
                <path d="M1 4C6-1 22 0 23 12c0 7-3 11-5 11C8 20 2 12 1 4z" fill="#74b94f" />
                <ellipse cx="11.500" cy="12" rx="7" ry="9.500" transform="rotate(-30 11.500 12)" fill="#cfe4f4" />
                <ellipse cx="11.500" cy="12.500" rx="4.800" ry="6.500" transform="rotate(-30 11.500 12)" fill="#8fbce2" />
                <ellipse cx="12" cy="12.500" rx="2" ry="3" transform="rotate(-30 12 12)" fill="#fff" />
              </Ic>
              <Ic w="w-[68px]"><CubeG /></Ic>
              <Ic w="w-[68px]"><path d="m6.500 6 8-4 3 1.500v13l-7.500 5-3.500-2z" fill={G2} /><path d="M10 8l7.500-3v12L10 22z" fill="#cbe9b5" /><Cube3 /></Ic>
              <Ic w="w-[68px]">
                <path d="m2.500 5 5-2v3l4 1.500 10-3.500v13h-4.500v-6l-4 1V8L8 10l-2-1v2l-3.500-1z" fill={G2} />
                <path d="M14 8l6-2v9h-2.500v-5L14 11z" fill="#b7e39a" stroke="none" />
                <Cube3 />
              </Ic>
              <Ic w="w-[68px]">
                <g stroke="#b3b3b3"><path d="m2.500 5 8.500-3.500L21.500 4v13L11 22.500 2.500 18z" fill="#e9e9ec" /></g>
                <path d="m2.500 5 8.500-3.500L21.500 4v13L11 22.500 2.500 18zM2.500 5l8 3 11-4M10.500 8v14" stroke="#b3b3b3" />
                <ellipse cx="12" cy="9.500" rx="4" ry="4.500" fill="#d5d5d8" stroke="#a8a8a8" />
              </Ic>
              <Ic w="w-[68px]">
                <circle cx="12" cy="12" r="10" fill="#cfe3f3" />
                <path d="M2 12h20M4 6.500h16M4 17.500h16" />
                <ellipse cx="12" cy="12" rx="5" ry="10" />
                {[[12, 2], [12, 22], [2, 12], [22, 12], [7, 12], [17, 12]].map(([x, y]) => <circle key={x + "," + y} cx={x} cy={y} r="1.500" fill="#b9e296" strokeWidth=".7" />)}
              </Ic>
              <Ic w="w-[68px]">
                <path d="M1 4c4-3 7-3 10 0s7 1 12 1M1 9c4-6 8-4 10-1 2 2 7 2 12 2M1 15c4 6 8 4 10 1 2-2 7-2 12-2M1 20.500c5 3 7 2 10 0s7-1.500 12-1.500" strokeWidth="1.700" />
                <ellipse cx="8" cy="12" rx="3" ry="3.400" fill="#b9f096" stroke="#5f9a45" />
              </Ic>
              <Ic w="w-[68px]"><path d="M1 11c8 0 13-4 15.500-9l7 5.500c-.5 7-4 11-8.500 13.500H1z" fill="#82c45e" stroke="#6fa653" /><path d="M23.500 14v7H15c4-2 7-4.500 8.500-7z" fill="#cfe8bf" stroke="none" /><path d="M3 15c8 0 12-4 14.500-9l3 2.500C19 14 15 18 10 19H3z" fill="#9ad477" stroke="none" /></Ic>
              <Ic w="w-[68px]">
                <circle cx="12" cy="12" r="10.500" fill="#f4f6f1" />
                <circle cx="8.500" cy="8" r="3.200" fill="#d8eaf6" />
                <circle cx="16" cy="12.500" r="4.300" fill="#78d04e" />
                <circle cx="9" cy="18" r="2.500" fill="#d8eaf6" />
              </Ic>
              <Ic w="w-[68px]">
                <g stroke="#b0b0b0">
                  <circle cx="3.500" cy="4" r="2.800" fill="#eee" />
                  <circle cx="14" cy="14" r="9" fill="#f3f3f3" />
                  <circle cx="17" cy="14.500" r="3.700" fill="#d9d9d9" />
                  <circle cx="11" cy="18.500" r="2" fill="#e8e8e8" />
                </g>
              </Ic>
              <Handle w="w-[34px]" />
              <Ic w="w-[66px]">
                <path d="M1.500 1.500h17v13h-6v5h-11z" fill="#b9d8f3" stroke="#56604c" strokeWidth="1.300" />
                <rect x="14.500" y="15.500" width="8" height="8" fill="#5cb83f" stroke="#3b7a2a" strokeDasharray="1.200 1" />
              </Ic>
              <Ic w="w-[68px]">
                <circle cx="5.500" cy="6" r="4.300" fill="#fff" /><path d="M5.500 3v3l2 2.500" />
                <circle cx="17.500" cy="6" r="4.500" fill="#e8ad33" /><path d="m15.500 4 4 4M19.500 4l-4 4" strokeWidth="1.400" />
                <Plot />
              </Ic>
              <Ic w="w-[68px]">
                <path d="M3 3c6 2 12 2 18 2l-2 16c-5 1-10 0-14-1z" fill="#c1d9b0" stroke="#a3b594" strokeWidth=".8" />
                <path d="M4 21.500 22 7" stroke="#3a7cc0" strokeWidth="1.200" />
                <path d="m4 17 1 2 2-7 1.500 5 2-8 2 5 1.500-7 2 5 2-6 1 4" stroke="#5b93bf" strokeWidth=".9" />
                <circle cx="3.500" cy="22" r="1.500" fill="#3a7cc0" stroke="none" /><circle cx="22" cy="7" r="1.500" fill="#3a7cc0" stroke="none" />
              </Ic>
              <Ic w="w-[68px]">
                <circle cx="5.500" cy="6" r="4.300" fill="#fff" /><path d="M5.500 3v3l2 2.500" />
                <rect x="13" y="1.500" width="9" height="9" strokeDasharray="1 1.100" /><path d="m17.500 4 3 5h-6z" fill="#8ed36c" stroke="none" />
                <Plot />
              </Ic>
              <Ic w="w-[68px]">
                <path d="m2.500 6 9.500-4.500L21.500 6v12L12 23l-9.500-5z" fill="#d6e4ef" stroke="#bccbd8" />
                <path d="M12 5v15M6 9l12 6M18 9 6 15" stroke="#71807c" strokeWidth="1.200" />
              </Ic>
              <Handle w="w-[46px]" />
              <Ic w="w-[46px]">
                <path d="M1.500 17.500 18 1.500l4.500 5L6.500 23z" fill="#f0bb33" stroke="#8f7436" />
                <path d="m5 15 2.500 2.500M8 12l2.500 2.500M11 9l2.500 2.500M14 6l2.500 2.500" strokeWidth=".8" stroke="#8f7436" />
              </Ic>
            </div>

            {/* docks + views */}
            <div className="flex h-[1196px] shrink-0">
              {/* left docks */}
              <div className="flex w-[595px] shrink-0 flex-col">
                <div className="flex h-[40px] shrink-0 items-center justify-between pr-[5px] pl-[8px]">
                  <T w={215}>Pipeline Browser</T>
                  <DockButtons />
                </div>
                <div className="relative h-[335px] w-[594px] shrink-0 border-2 border-[#c0bfc0] bg-white">
                  <div className="flex h-[51px] items-center pt-[1px] pl-[64px]">
                    <div className="flex w-[32px] flex-col items-start">
                      <svg viewBox="0 0 18 51" className="h-[51px] w-[18px]" fill="none">
                        <path d="M9 0v8M9 43v8" stroke="#777" strokeWidth="1.500" />
                        <rect x="2" y="12" width="14" height="26" fill="#9b9b9b" stroke="#222" strokeWidth="2" />
                        <path d="M5 17h8" stroke="#000" strokeWidth="3" />
                        <path d="M6 24h6v12H6z" fill="#c9c9c9" />
                      </svg>
                    </div>
                    <T w={88} className="-mt-[2px]">builtin:</T>
                  </div>
                  <div className="flex h-[36px] items-center">
                    <svg viewBox="0 0 28 20" className="ml-[8px] h-[20px] w-[28px]" fill="none">
                      <path d="M1 10C8 1 20 1 27 10 20 19 8 19 1 10z" fill="#f4f4f4" stroke="#999" strokeWidth="1.500" />
                      <circle cx="14" cy="10" r="7.500" fill="#4b9ade" />
                      <circle cx="14" cy="10" r="4.500" fill="#0b0b18" />
                      <circle cx="17" cy="7" r="2" fill="#fff" />
                    </svg>
                    <div className="ml-[19px] flex h-[36px] w-[188px] items-center bg-[#4a8fcc] text-[#dfeaf5]">
                      <svg viewBox="0 0 32 32" className="mr-[7px] h-[30px] w-[33px]" strokeWidth="1.200">
                        <path d="m4 5 14-4 12 4v20L18 31 5 27z" fill="#549a58" stroke="#4f8466" />
                        <path d="m4 5 12 5v20L5 27z" fill="#47845a" stroke="#4f8466" />
                        <path d="M16 10l12-4v20l-12 4z" fill="#62b05c" stroke="#4f8466" />
                      </svg>
                      <T w={138} className="-mt-[2px]">foam.foam</T>
                    </div>
                  </div>
                </div>
                <div className="flex h-[12px] shrink-0 items-center justify-center gap-[4px]">
                  {[0, 1, 2, 3, 4, 5].map((i) => <div key={i} className="h-[3px] w-[2px] bg-[#b5b5b5]" />)}
                </div>
                <div className="flex h-[56px] shrink-0 items-end border-b-2 border-[#c0bfc0]">
                  <div className="-mb-[2px] flex h-[56px] w-[184px] items-center justify-center rounded-t-[6px] border-2 border-b-0 border-[#bdbcbd] bg-linear-to-b from-[#fdfcfd] to-[#f3f1f3]">
                    <T w={131} className="-ml-[3px]">Properties</T>
                  </div>
                  <div className="flex h-[51px] w-[201px] items-center justify-center rounded-tr-[6px] border-2 border-b-0 border-l-0 border-[#bdbcbd] bg-[#dededf]">
                    <T w={149}>Information</T>
                  </div>
                </div>
                <div className="flex h-[44px] shrink-0 items-center justify-between pr-[5px] pl-[8px]">
                  <T w={130}>Properties</T>
                  <DockButtons />
                </div>
                <div className="mt-[14px] flex h-[50px] shrink-0 gap-[5px] pl-[17px]">
                  <div className={btn + "w-[160px] border-[#d3d2d3] text-[#bcbcbc]"}>
                    <svg viewBox="0 0 24 24" className="h-[34px] w-[34px]" fill="none"><Extract grey /></svg>
                    <T w={72}>Apply</T>
                  </div>
                  <div className={btn + "w-[160px] border-[#d3d2d3] text-[#bcbcbc]"}>
                    <svg viewBox="0 0 24 24" className="mr-[3px] h-[31px] w-[31px]" fill="none">
                      <circle cx="12" cy="12" r="8.500" stroke="#9c9c9c" strokeWidth="6" fill="#e0e0e0" />
                      <path d="m6 17 12-10" stroke="#9c9c9c" strokeWidth="5" />
                    </svg>
                    <T w={73}>Reset</T>
                  </div>
                  <div className={btn + "w-[160px] border-[#b9b8b9] text-[#1c1c1c]"}>
                    <svg viewBox="0 0 24 24" className="mr-[7px] h-[27px] w-[25px]" fill="none">
                      <path d="m3 3 18 18M21 3 3 21" stroke="#a3563c" strokeWidth="8" />
                      <path d="m4 4 16 16M20 4 4 20" stroke="#e9603f" strokeWidth="5.500" />
                    </svg>
                    <T w={84}>Delete</T>
                  </div>
                  <div className={btn + "h-[48px] w-[66px] border-[#b9b8b9]"}>
                    <svg viewBox="0 0 24 30" className="h-[28px] w-[22px]" fill="none">
                      <path d="M4 10c0-9 16-9 16-1 0 6-7 5-7 12M13 24v5" stroke="#8b8b78" strokeWidth="6.500" />
                      <path d="M4 9.500c0-8.500 16-8.500 16-.5 0 6-7 5-7 12M13 24.500v4" stroke="#4aa7ea" strokeWidth="4.800" />
                    </svg>
                  </div>
                </div>
                <div className="mt-[12px] flex h-[50px] shrink-0 items-center gap-[4px] pl-[17px]">
                  <div className="flex h-[50px] w-[507px] shrink-0 items-center rounded-[5px] border-2 border-[#bdbcbd] bg-white pl-[5px] text-[#a0a0a0]">
                    <T w={415}>Search ... (use Esc to clear text)</T>
                  </div>
                  <div className={btn + "h-[47px] w-[48px] border-[#b9b8b9]"}>
                    <svg viewBox="0 0 32 32" className="h-[33px] w-[33px]" fill="none" stroke="#8e959c">
                      <circle cx="16" cy="16" r="12.500" strokeWidth="5" strokeDasharray="5 4.800" />
                      <circle cx="16" cy="16" r="9.500" fill="#e8ecf0" strokeWidth="2" />
                      <circle cx="16" cy="16" r="3.500" fill="#f8f8f8" strokeWidth="2" />
                    </svg>
                  </div>
                </div>

                {/* scrolling property sheet */}
                <div className="mt-[12px] flex h-[525px] w-[577px] shrink-0 pl-[17px]">
                  <div className="flex h-[525px] w-[533px] shrink-0 flex-col overflow-hidden">
                    <div className="flex h-[54px] w-[600px] shrink-0 items-center">
                      <div className="flex h-[54px] w-[353px] shrink-0 items-center border-2 border-[#c4c3c4] pl-[19px]">
                        <div className="h-[13px] w-[27px] border-2 border-[#2b3a7c] bg-[#7f97dc]" />
                        <T w={268} className="ml-[17px] font-bold text-black">Properties (foam.f</T>
                      </div>
                      <div className={btn + "ml-[8px] h-[48px] w-[56px] border-[#c0bfc0]"}>
                        <svg viewBox="0 0 30 30" className="h-[30px] w-[30px]" fill="#e9e9e4" stroke="#3c3c3c" strokeWidth="2">
                          <path d="M10 2h13l5 5v17H10z" />
                          <path d="M2 7h10l5 5v15H2z" />
                          <path d="M12 7v5h5M22 2v6h6" fill="none" />
                        </svg>
                      </div>
                      <div className={btn + "ml-[8px] h-[48px] w-[56px] border-[#d0cfd0]"}>
                        <svg viewBox="0 0 30 30" className="h-[30px] w-[30px]" fill="#a9a9a5" stroke="#85857f" strokeWidth="2">
                          <path d="M2 5h20v22H4L2 25zM8 2h8v5H8z" />
                          <path d="M16 12h8l5 5v11H16z" fill="#eee" />
                        </svg>
                      </div>
                      <div className={btn + "ml-[8px] h-[48px] w-[56px] border-[#c0bfc0]"}>
                        <svg viewBox="0 0 30 30" className="h-[30px] w-[30px]" fill="none" stroke="#3b84cb" strokeWidth="6">
                          <path d="M4 14C5 4 16 1 23 8M26 16c-1 10-12 13-19 6" />
                          <path d="M28 1v12H17zM2 29V17h11z" fill="#3b84cb" stroke="none" />
                        </svg>
                      </div>
                    </div>
                    <div className={btn + "mt-[12px] h-[50px] w-[160px] border-[#bdbcbd]"}>
                      <T w={98}>Refresh</T>
                    </div>
                    <div className="mt-[16px] flex h-[29px] shrink-0 items-center gap-[11px]">
                      <Check on />
                      <T w={196}>Skip Zero Time</T>
                    </div>
                    <div className="mt-[17px]">
                      <Prop label="Case Type" lw={135} value="Reconstructed Case" vw={259} />
                      <Prop label="Label Size" lw={130} value="32-bit" vw={75} />
                      <Prop label="Scalar Size" lw={141} value="64-bit (DP)" vw={138} />
                    </div>
                    <div className="mt-[10px] flex h-[29px] shrink-0 items-center gap-[11px]">
                      <Check on />
                      <T w={417}>Create cell-to-point filtered data</T>
                    </div>
                    <div className="mt-[25px] flex h-[29px] shrink-0 items-center gap-[11px]">
                      <Check />
                      <T w={492}>Add dimensional units to array names</T>
                    </div>
                    <div className="mt-[17px] w-[600px] shrink-0 border-2 border-[#c0bfc0] bg-white">
                      <div className="flex h-[43px] items-center gap-[11px] border-b-2 border-[#b9b8b9] bg-linear-to-b from-[#fdfcfd] to-[#eeedee] pl-[6px]">
                        <Check part />
                        <T w={178}>Mesh Regions</T>
                      </div>
                      <div className="flex h-[40px] items-start gap-[13px] pt-[2px] pl-[6px]">
                        <Check />
                        <T w={60} className="-mt-[1px]">back</T>
                      </div>
                    </div>
                  </div>
                  <div className="flex h-[525px] w-[28px] shrink-0 flex-col border-b-2 border-l-2 border-[#c6c5c6] bg-[#e5e4e5]">
                    <div className="flex h-[27px] items-center justify-center border-b-2 border-[#c6c5c6] bg-[#f6f5f6]"><Caret up /></div>
                    <div className="h-[91px] border-b-2 border-[#c0bfc0] bg-[#fafafa]" />
                    <div className="mt-auto flex h-[29px] items-center justify-center border-t-2 border-[#c6c5c6] bg-[#f8f7f8]"><Caret /></div>
                  </div>
                </div>
                <div className="ml-[17px] flex h-[27px] w-[533px] shrink-0 border-t-2 border-r-2 border-[#c6c5c6] bg-[#e5e4e5]">
                  <div className="flex w-[27px] items-center justify-center border-r-2 border-[#c6c5c6] bg-[#f8f7f8]">
                    <svg viewBox="0 0 9 16" className="h-[16px] w-[9px]" fill="#5c5c5c"><path d="M9 0v16L0 8z" /></svg>
                  </div>
                  <div className="w-[415px] border-r-2 border-[#c0bfc0] bg-[#f9f8f9]" />
                  <div className="ml-auto flex w-[28px] items-center justify-center border-l-2 border-[#c6c5c6] bg-[#f8f7f8]">
                    <svg viewBox="0 0 9 16" className="h-[16px] w-[9px]" fill="#5c5c5c"><path d="M0 0v16l9-8z" /></svg>
                  </div>
                </div>
              </div>

              {/* splitter */}
              <div className="flex w-[12px] shrink-0 flex-col items-center justify-center gap-[4px]">
                {[0, 1, 2, 3, 4, 5].map((i) => <div key={i} className="h-[2px] w-[3px] bg-[#b5b5b5]" />)}
              </div>

              {/* view area */}
              <div className="flex w-[1696px] shrink-0 flex-col">
                <div className="flex h-[57px] shrink-0 items-end border-b-2 border-[#bdbcbd]">
                  <div className="-mb-[2px] flex h-[55px] w-[243px] shrink-0 items-center rounded-t-[6px] border-2 border-b-0 border-[#bdbcbd] bg-white pl-[20px] text-[26px]">
                    <svg viewBox="0 0 20 20" className="h-[20px] w-[20px]" fill="none" stroke="#222"><rect x="1.500" y="2" width="16" height="16" strokeWidth="2.400" /><path d="M0 3h19" strokeWidth="4" /></svg>
                    <T w={132} className="mr-[10px] ml-[10px]">Layout #1</T>
                    <XBox />
                  </div>
                  <div className="flex h-[50px] w-[71px] shrink-0 items-center justify-center rounded-tr-[6px] border-2 border-b-0 border-l-0 border-[#c6c5c6] bg-[#eeeaee]">
                    <T w={19}>+</T>
                  </div>
                </div>
                <div className="flex h-[44px] shrink-0 items-center border-l-2 border-[#bdbcbd] bg-white pb-[2px]">
                  <Sm>
                    <path d="M5 2h9v9H5z" fill="#b9b9a4" /><circle cx="10" cy="5.500" r="2.500" fill="#eee" />
                    <path d="M1 8v7l6-1-2-2c2-2 4-1 4 3 3-4 0-7-5-6z" fill="#e6502f" stroke="#a3402b" strokeWidth=".7" />
                  </Sm>
                  <Sm>
                    <g stroke="#b0b0b0"><path d="M2 2h8v9H2z" fill="#e0e0e0" /><circle cx="6.500" cy="5.500" r="2.300" fill="#f4f4f4" /><path d="M15 8v7l-6-1 2-2c-2-2-4-1-4 3-3-4 0-7 5-6z" fill="#dcdcdc" strokeWidth=".7" /></g>
                  </Sm>
                  <Sep w="w-[12px]" />
                  <T w={25} className="mx-[8px] text-[19px]">3D</T>
                  <Sm w="w-[38px]">
                    <path d="M1.500 2.500h12v10h-12z" fill="#c3c3af" /><circle cx="7.500" cy="7" r="3.200" fill="#e8e8dd" />
                    <circle cx="11.500" cy="12" r="3.500" fill="#7ee052" stroke="#58b836" /><circle cx="11.500" cy="12" r="1.200" fill="#fff" stroke="none" />
                  </Sm>
                  <Sep w="w-[14px]" />
                  <Sm><Dots /><path d="M3 5h6M6 2v6" stroke="#2a8a22" strokeWidth="2.200" /><Cur /></Sm>
                  <Sm><Dots /><path d="M4 5.500h6" stroke="#dd2b22" strokeWidth="2.400" /><Cur /></Sm>
                  <Sm><Dots /><path d="M4 4.500h6M7 1.500v6" stroke="#2a8a22" strokeWidth="2" /><path d="M4 9.500h6" stroke="#dd2b22" strokeWidth="2" /><Cur /></Sm>
                  <Sep w="w-[12px]" />
                  <Sm><Dots /><path d="m7.500 3 4.500 9H3z" fill="#a5d684" stroke="none" /><Cur /></Sm>
                  <Sm><Dots /><RedDots p={[[6.500, 3], [3, 9.500]]} /><path d="M7.500 4 4 10" stroke="#e8b08f" strokeWidth=".7" /><Cur /></Sm>
                  <Sm><path d="M1.500 2v11l8 2M1.500 2l3-.5" strokeDasharray="1 1" /><path d="M4 4.500 9 2l5 1.500v7L9 13l-4-1.500z" fill="#7fc45e" stroke="#5f9a45" /><path d="M5 5v6M9 6v6" stroke="#5f9a45" strokeWidth=".7" /></Sm>
                  <Sm><path d="M2 3v10l8 1V4z" stroke="#999" strokeDasharray="1 1" /><RedDots p={[[4, 4], [4, 8], [8, 6], [8, 10], [13, 2], [13, 7], [13, 11], [9, 2]]} /></Sm>
                  <Sm><Lasso /><path d="m5 7 4 4-5 0z" fill="#8bc96a" stroke="none" /></Sm>
                  <Sm><Lasso /><RedDots p={[[3, 3], [4, 7], [7, 9], [11, 5], [11, 11]]} /></Sm>
                  <Sm><Dots c="#999" /><path d="m6 5 3 5H3z" fill="#bbb" stroke="none" /><path d="M9 6l4 5-3 1z" fill="#7fae63" stroke="none" /><Cur /></Sm>
                  <Sm><path d="m7 3 5 9H2z" fill="#a5d684" stroke="#8fbf73" strokeWidth=".6" /><Cur /></Sm>
                  <Sm><path d="M7 3 2.500 10M7 3l4 6" stroke="#d9a58d" strokeWidth=".8" /><RedDots p={[[6, 2], [1.500, 9.500]]} /><Cur /></Sm>
                  <Sm w="w-[39px]"><RedDots p={[[1, 8.500]]} /><path d="M6.500 5c0-4 6.500-3.500 6.500 0 0 3-3.500 3-3.500 6M9.500 12.500v2.500" strokeWidth="2.200" stroke="#77705f" /></Sm>
                  <Sm w="w-[39px]"><path d="m5 7 4 7.500H.5z" fill="#a5d684" stroke="#8fbf73" strokeWidth=".6" /><path d="M7.500 5c0-4 6.500-3.500 6.500 0 0 3-3.500 3-3.500 6M10.500 12.500v2" strokeWidth="1.800" stroke="#8a8474" /></Sm>
                  <Sm><path d="M3.500 4h10v11.500h-10z" fill="#b3b3b3" stroke="#a5a5a5" /><path d="M2.500 3.500h12M6.500 1.500h4" stroke="#9a9a9a" strokeWidth="1.800" /></Sm>
                  <div className="mr-[23px] ml-auto border-b-[3px] border-[#3c3c3c] leading-[27px]">
                    <T w={193} className="block text-[24.500px] font-bold text-black">RenderView1</T>
                  </div>
                  <div className="flex gap-[4px] pr-[5px]">
                    <ViewButton><svg viewBox="0 0 18 18" className="h-[19px] w-[19px]" fill="#e3e5f6" stroke="#222" strokeWidth="2"><path d="M1 1h16v16H1zM9 1v16" /></svg></ViewButton>
                    <ViewButton><svg viewBox="0 0 18 18" className="h-[19px] w-[19px]" fill="#e3e5f6" stroke="#222" strokeWidth="2"><path d="M1 1h16v16H1zM1 9h16" /></svg></ViewButton>
                    <ViewButton><svg viewBox="0 0 18 18" className="h-[19px] w-[19px]" fill="#fff" stroke="#222" strokeWidth="2"><path d="M1 1h16v16H1z" /><path d="M0 2h18" strokeWidth="4" /></svg></ViewButton>
                    <ViewButton><svg viewBox="0 0 22 22" className="h-[21px] w-[21px]" fill="none" stroke="#99998f" strokeWidth="1.800"><rect x="1" y="1" width="20" height="20" rx="4" /><rect x="8.500" y="5" width="8" height="8" rx="1.500" /><rect x="5.500" y="9" width="8" height="8" rx="1.500" fill="#eee" /></svg></ViewButton>
                    <ViewButton><svg viewBox="0 0 22 22" className="h-[21px] w-[21px]" fill="none" stroke="#8a8a80" strokeWidth="1.800"><rect x="1" y="1" width="20" height="20" rx="4" /><path d="m6.500 6.500 9 9M15.500 6.500l-9 9" strokeWidth="3.200" /></svg></ViewButton>
                  </div>
                </div>

                {/* render view */}
                <div className="h-[1094px] border-l-2 border-[#bdbcbd] bg-white">
                  <div className="h-[1092px] w-[1692px] border-4 border-[#1500ee]">
                    <div className="relative h-[1084px] w-[1684px] border-2 border-[#dcdcec] bg-[#525469] pt-[14px] pl-[55px]">
                      <Field />
                      <div className="absolute top-[697px] left-[1446px] h-[357px] w-[32px] bg-[linear-gradient(to_bottom,#a3202b_0%,#cf5f4c_12%,#e8967a_24%,#efc3ab_36%,#dddcdb_50%,#b7ccf7_64%,#8fabf7_76%,#6684e4_88%,#3f50c4_100%)]" />
                      {legend.map((l) => (
                        <div key={l.t} className="absolute left-[1472px] flex h-[40px] items-center text-[33px] font-light text-[#ebe2de] font-['Inter',sans-serif]" style={{ top: 678 + l.y }}>
                          <div className="h-[3px] w-[24px] bg-[#efe6e2]" />
                          <T w={l.w} className={l.t[0] === "1" ? "mb-[8px] ml-[13px]" : "mb-[8px] ml-[9px]"}>{l.t}</T>
                        </div>
                      ))}
                      <div className="absolute top-[973px] left-[1628px] origin-top-left -rotate-90 text-[32px] leading-[36px] text-[#d9dae2] font-['Lato',sans-serif]">
                        <T w={203}>U Magnitude</T>
                      </div>
                    </div>
                  </div>
                </div>
              </div>
            </div>

            {/* status bar */}
            <div className="-mt-[1px] flex h-[52px] shrink-0 items-center pl-[1129px]">
              <div className="flex h-[37px] w-[38px] items-center justify-center rounded-[5px] border-2 border-[#cfcecf] bg-[#f8f7f8]">
                <svg viewBox="0 0 20 20" className="h-[18px] w-[18px]" stroke="#adadad" strokeWidth="6"><path d="m3 3 14 14M17 3 3 17" /></svg>
              </div>
              <div className="ml-[6px] h-[38px] w-[1082px] border-2 border-[#fafafa] border-t-[#a9a9a9] border-l-[#a9a9a9]" />
              <svg viewBox="0 0 24 24" className="mt-auto ml-auto h-[24px] w-[24px]" fill="#b5b5b5">
                {[[20, 2], [14, 8], [20, 8], [8, 14], [14, 14], [20, 14], [2, 20], [8, 20], [14, 20], [20, 20]].map(([x, y]) => <rect key={x + "." + y} x={x} y={y} width="2" height="2" />)}
              </svg>
            </div>
            <div className="flex h-[8px] shrink-0 justify-between border-t-2 border-[#84838a] bg-[#ebebf0]">
              <div className="w-[51px] border-r-2 border-[#555]" />
              <div className="w-[51px] border-l-2 border-[#555]" />
            </div>
          </div>
        </div>

        {/* vertical page scrollbar */}
        <div className="w-[34px] shrink-0 pt-[6px] pl-[11px]">
          <div className="h-[1247px] w-[17px] rounded-[8px] bg-[#c1c1c1]" />
        </div>
        <div className="h-[1672px] w-[10px] shrink-0 bg-[linear-gradient(to_bottom,#39446e_0px,#44598c_400px,#5878a8_700px,#6076b2_860px,#3a489c_880px,#202c5c_930px,#05090c_960px,#06090f_1672px)]" />
      </div>
      {/* horizontal page scrollbar */}
      <div className="h-[20px] pt-[8px] pl-[6px]">
        <div className="h-[20px] w-[2258px] rounded-[8px] bg-[#c1c1c1]" />
      </div>
    </div>
  );
}
